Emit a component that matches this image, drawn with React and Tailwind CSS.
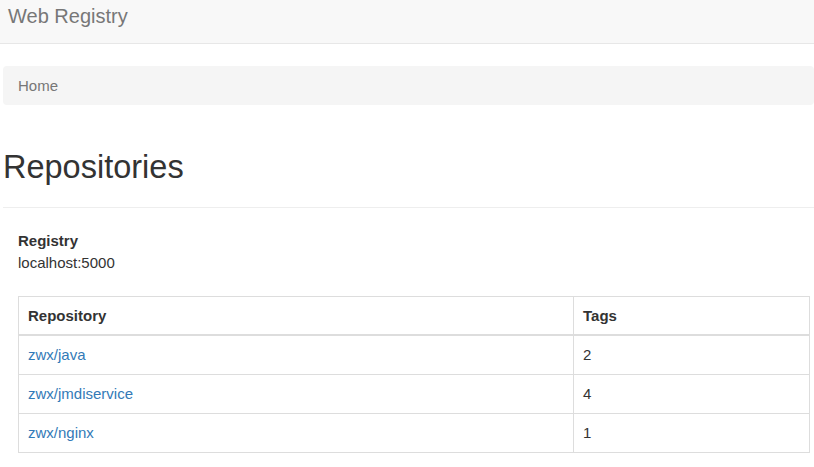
import React from "react";

const repos = [
  { name: "zwx/java", tags: 2 },
  { name: "zwx/jmdiservice", tags: 4 },
  { name: "zwx/nginx", tags: 1 },
];

export default function App() {
  return (
    <div className="min-h-screen bg-white font-['Liberation_Sans',Arial,sans-serif] text-[15px] leading-[22px] text-[#333]">
      {/* Navbar */}
      <nav className="h-[44px] border-b border-[#e7e7e7] bg-[#f8f8f8]">
        <div className="pl-[8px] pt-[6px] text-[20px] leading-[20px] text-[#777]">Web Registry</div>
      </nav>

      <main className="pl-[3px]">
        {/* Breadcrumb */}
        <div className="mt-[22px] flex h-[39px] items-center rounded-[4px] bg-[#f5f5f5] px-[15px] text-[#777]">
          Home
        </div>

        {/* Page header */}
        <div className="mt-[44px] border-b border-[#eee] pb-[22px]">
          <h1 className="text-[32.5px] leading-[36px] font-normal text-[#333]">Repositories</h1>
        </div>

        <div className="pl-[15px] pr-[4px]">
          <div className="mt-[22px]">
            <div className="font-bold">Registry</div>
            <div>localhost:5000</div>
          </div>

          <table className="mt-[22px] w-full border-collapse border border-[#ddd] text-left">
            <thead>
              <tr>
                <th className="w-[555px] border border-b-2 border-[#ddd] px-[9px] pt-[8px] pb-[7px] font-bold">Repository</th>
                <th className="border border-b-2 border-[#ddd] px-[9px] pt-[8px] pb-[7px] font-bold">Tags</th>
              </tr>
            </thead>
            <tbody>
              {repos.map((r) => (
                <tr key={r.name}>
                  <td className="border border-[#ddd] px-[9px] py-[8px]">
                    <a href="#" className="text-[#337ab7]">{r.name}</a>
                  </td>
                  <td className="border border-[#ddd] px-[9px] py-[8px]">{r.tags}</td>
                </tr>
              ))}
            </tbody>
          </table>
        </div>
      </main>
    </div>
  );
}
